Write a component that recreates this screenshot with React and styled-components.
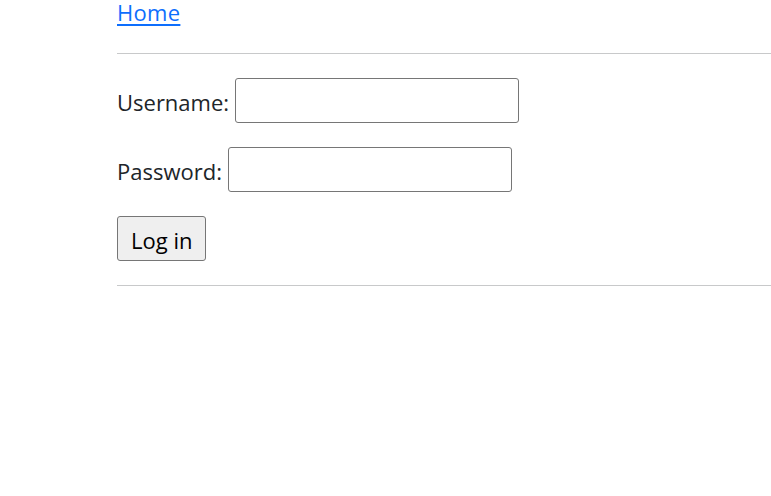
import React from "react";
import styled, { createGlobalStyle } from "styled-components";

const Global = createGlobalStyle`
  html, body { margin: 0; padding: 0; background: #fff; }
  body {
    font-family: "Open Sans", "Noto Sans", sans-serif;
    font-size: 22px;
    color: #212529;
  }
`;

const Page = styled.div`
  padding-left: 117px;
  display: flex;
  flex-direction: column;
`;

const Nav = styled.nav`
  line-height: 24px;
  height: 24px;
`;

const HomeLink = styled.a`
  color: #0d6efd;
  text-decoration: underline;
  text-underline-offset: 3px;
  letter-spacing: 0.3px;
`;

const Rule = styled.hr`
  margin: ${(p) => p.$top || 0}px 0 0 0;
  border: 0;
  border-top: 1px solid #c8c9ca;
  height: 0;
`;

const Form = styled.form`
  display: flex;
  flex-direction: column;
  gap: 24px;
  margin: 24px 0;
`;

const Row = styled.div`
  display: flex;
  align-items: center;
  gap: 6px;
  height: 45px;
`;

const Label = styled.label`
  line-height: 45px;
  padding-top: 3px;
  white-space: nowrap;
`;

const Input = styled.input`
  box-sizing: border-box;
  width: 284px;
  height: 45px;
  border: 1px solid #767676;
  border-radius: 3px;
  background: #fff;
  font: inherit;
  padding: 0 6px;
`;

const Button = styled.button`
  align-self: flex-start;
  box-sizing: border-box;
  height: 45px;
  padding: 2px 13px 0;
  background: #efefef;
  border: 1px solid #767676;
  border-radius: 3px;
  font: inherit;
  color: #000;
  line-height: 1;
`;

export default function App() {
  return (
    <>
      <Global />
      <Page>
        <Nav>
          <HomeLink href="#">Home</HomeLink>
        </Nav>
        <Rule $top={29} />
        <Form onSubmit={(e) => e.preventDefault()}>
          <Row>
            <Label htmlFor="u">Username:</Label>
            <Input id="u" type="text" />
          </Row>
          <Row>
            <Label htmlFor="p">Password:</Label>
            <Input id="p" type="password" />
          </Row>
          <Button type="submit">Log in</Button>
        </Form>
        <Rule />
      </Page>
    </>
  );
}
